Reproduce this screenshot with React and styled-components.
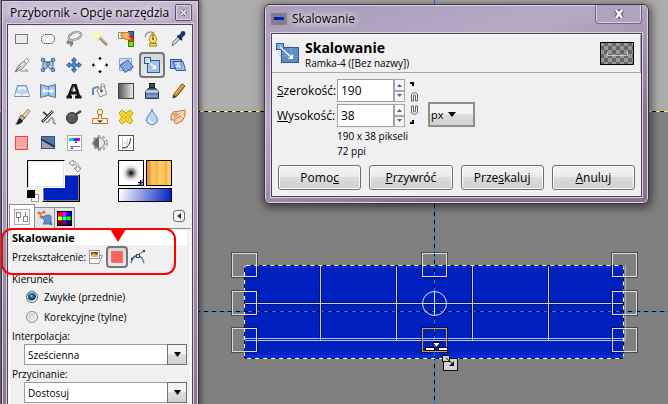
import React, { useState } from 'react'
import styled, { createGlobalStyle, css } from 'styled-components'

const GlobalStyle = createGlobalStyle`
    * {
        box-sizing: border-box;
    }
    body {
        margin: 0;
        background: #808080;
    }
    body, button, input, select {
        font-family: "Open Sans", "Noto Sans", "Liberation Sans", sans-serif;
        font-size: 11px;
        color: #000;
    }
    button, select {
        margin: 0;
        padding: 0;
    }
    svg {
        display: block;
    }
`

const Desktop = styled.main`
    position: relative;
    min-height: 100vh;
    overflow: hidden;
    background: linear-gradient(#acacac 0, #acacac 111px, #808080 111px);
`

const CanvasLayer = styled.svg`
    position: absolute;
    inset: 0;
    width: 100%;
    height: 100%;
`

const Window = styled.section`
    position: absolute;
    left: ${p => p.$left}px;
    top: ${p => p.$top}px;
    width: ${p => p.$width}px;
    padding: 0 ${p => p.$frame}px ${p => p.$frame}px;
    border: 1px solid #3c3544;
    border-radius: ${p => p.$radius};
    background: ${p => p.$background};
    box-shadow: inset 0 0 0 1px #ddd3e6, ${p => p.$shadow};
`

const TitleBar = styled.header`
    display: flex;
    align-items: center;
    height: ${p => p.$height}px;
    padding-left: ${p => p.$indent}px;
    gap: 5px;
`

const TitleText = styled.h1`
    flex: 1;
    margin: 0;
    font-size: 12px;
    font-weight: 400;
    line-height: 18px;
    white-space: nowrap;
    text-shadow: 0 0 6px #fff, 0 0 8px #fff;
`

const WindowBody = styled.div`
    border: 1px solid #4a4153;
    background: #f0f0f0;
    box-shadow: 0 0 0 1px #d9cfe3;
`

const SmallClose = styled.button`
    display: grid;
    place-items: center;
    width: 17px;
    height: 17px;
    margin-right: 1px;
    border: 1px solid #5d5369;
    border-radius: 2px;
    background: #b9adc6;
    box-shadow: inset 0 0 0 1px #dcd4e4;
`

const WideClose = styled.button`
    display: grid;
    place-items: center;
    align-self: flex-start;
    width: 47px;
    height: 19px;
    border: 1px solid #71677f;
    border-top: 0;
    border-radius: 0 0 4px 4px;
    background: #b0a3bf;
    box-shadow: inset 0 -1px 0 #d8cfe1, inset 1px 0 0 #d8cfe1, inset -1px 0 0 #d8cfe1;
`

const ToolGrid = styled.div`
    display: grid;
    grid-template-columns: repeat(7, 26px);
    grid-auto-rows: 26px;
    padding: 1px 1px 0;
`

const pressed = css`
    border: 2px solid #74767a;
    border-radius: 4px;
    background: linear-gradient(#d6d6d6, #e9e9e9);
`

const ToolButton = styled.button`
    display: grid;
    place-items: center;
    border: 0;
    background: transparent;
    ${p => p.$active && pressed}
`

const ColorArea = styled.div`
    display: flex;
    justify-content: space-between;
    height: 48px;
    padding: 4px 20px 0 19px;
`

const SwatchStack = styled.div`
    position: relative;
    width: 56px;
    height: 42px;
`

const Swatch = styled.button`
    position: absolute;
    left: ${p => p.$left}px;
    top: ${p => p.$top}px;
    width: 38px;
    height: 28px;
    border: 1px solid;
    border-color: ${p => p.$raised ? '#fff #000 #000 #fff' : '#000 #fff #fff #000'};
    background: ${p => p.$color};
    box-shadow: inset 0 0 0 1px ${p => p.$raised ? '#7c7c7c' : '#e4e4e4'};
`

const SwatchCorner = styled.button`
    position: absolute;
    left: ${p => p.$left}px;
    top: ${p => p.$top}px;
    border: 0;
    background: transparent;
`

const Previews = styled.div`
    display: grid;
    grid-template-columns: 26px 26px;
    grid-template-rows: 26px 14px;
    gap: 2px;
`

const PreviewButton = styled.button`
    border: 1px solid #000;
    background: ${p => p.$fill};
    overflow: hidden;
    grid-column: ${p => p.$wide ? '1 / 3' : 'auto'};
`

const TabStrip = styled.div`
    display: flex;
    align-items: flex-end;
    height: 24px;
    padding-left: 1px;
`

const Tab = styled.button`
    display: grid;
    place-items: center;
    width: ${p => p.$active ? 26 : 20}px;
    height: ${p => p.$active ? 24 : 21}px;
    border: 1px solid #8d8d99;
    border-bottom: 0;
    border-left-width: ${p => p.$active ? 1 : 0}px;
    background: ${p => p.$active ? '#fff' : '#e4e4e8'};
`

const TabMenu = styled.button`
    display: grid;
    place-items: center;
    width: 12px;
    height: 12px;
    margin: 0 7px 6px auto;
    border: 1px solid #6c6c6c;
    border-radius: 3px;
    background: #f6f6f6;
`

const OptionsPage = styled.div`
    position: relative;
    min-height: 200px;
    margin: 0 1px;
    padding: 1px 3px 60px 2px;
    border-top: 1px solid #8d8d99;
    border-right: 1px solid #fff;
    border-left: 1px solid #fff;
`

const OptionsTitle = styled.h2`
    margin: 0;
    background: #fff;
    font-size: 11px;
    font-weight: 700;
    line-height: 15px;
`

const OptionRow = styled.div`
    display: flex;
    align-items: center;
    height: 24px;
    font-size: 10px;
`

const IconToggle = styled.button`
    display: grid;
    place-items: center;
    width: ${p => p.$active ? 22 : 20}px;
    height: 22px;
    border: 0;
    background: transparent;
    ${p => p.$active && pressed}
`

const RadioSet = styled.fieldset`
    margin: 3px 0 0;
    padding: 0;
    border: 0;
`

const Legend = styled.legend`
    padding: 0;
    font-size: 10px;
    line-height: 15px;
`

const RadioLabel = styled.label`
    display: flex;
    align-items: center;
    gap: 6px;
    height: 20px;
    padding-left: 14px;
    font-size: 10px;
`

const Radio = styled.input`
    appearance: none;
    width: 12px;
    height: 12px;
    margin: 0;
    border: 1px solid #8a8a8a;
    border-radius: 50%;
    background: linear-gradient(135deg, #c4c4c4, #f8f8f8);
    box-shadow: inset 0 0 0 1px #f4f4f4;
    &:checked {
        border-color: #5b6670;
        background: radial-gradient(circle at 45% 40%, #6fd0f4 0, #156a9c 2px, #0b3558 4px, #e8eef2 5px);
    }
`

const SelectLabel = styled.label`
    display: block;
    margin-top: 2px;
    font-size: 10px;
    line-height: 15px;
`

const SelectBox = styled.div`
    display: flex;
    position: relative;
    height: 21px;
    margin-left: 12px;
`

const Select = styled.select`
    appearance: none;
    flex: 1;
    padding: 0 24px 0 3px;
    border: 1px solid #9a9a9a;
    border-radius: 0;
    background: #fff;
    font-size: 10px;
`

const SelectArrow = styled.span`
    position: absolute;
    right: 0;
    top: 0;
    display: grid;
    place-items: center;
    width: 20px;
    height: 100%;
    border: 1px solid #707070;
    background: linear-gradient(#f4f4f4 45%, #dcdcdc 50%, #d0d0d0);
    pointer-events: none;
`

const Highlight = styled.svg`
    position: absolute;
    left: -10px;
    top: -2px;
    pointer-events: none;
`

const DialogHeader = styled.div`
    display: flex;
    align-items: center;
    gap: 5px;
    height: 39px;
    padding: 0 6px 0 3px;
    border-top: 1px solid #fff;
    border-right: 1px solid #a8a8a8;
    border-bottom: 1px solid #a8a8a8;
`

const DialogHeading = styled.div`
    flex: 1;
`

const DialogTitle = styled.h2`
    margin: 0;
    padding-top: 2px;
    font-size: 14px;
    font-weight: 700;
    line-height: 16px;
`

const DialogSubtitle = styled.p`
    margin: 0;
    font-size: 10px;
    line-height: 14px;
`

const Form = styled.form`
    padding: 6px 6px 6px 5px;
`

const SizeFields = styled.div`
    display: grid;
    grid-template-columns: 60px 68px 14px auto;
    grid-template-rows: 23px 23px auto;
    row-gap: 2px;
    justify-content: start;
`

const FieldLabel = styled.label`
    grid-column: 1;
    align-self: center;
    font-size: 12px;
    line-height: 18px;
`

const Spin = styled.div`
    grid-column: 2;
    display: grid;
    grid-template-columns: 1fr 11px;
    grid-template-rows: 1fr 1fr;
`

const SpinInput = styled.input`
    grid-row: 1 / 3;
    min-width: 0;
    width: 100%;
    padding: 0 3px;
    border: 1px solid #a0a0a0;
    border-radius: 0;
    background: #fff;
    font-size: 12px;
`

const SpinButton = styled.button`
    display: grid;
    place-items: center;
    border: 1px solid #a6a6a6;
    background: #f6f6f6;
`

const Chain = styled.button`
    grid-column: 3;
    grid-row: 1 / 3;
    justify-self: end;
    border: 0;
    background: transparent;
`

const UnitBox = styled.div`
    grid-column: 4;
    grid-row: 1 / 3;
    align-self: end;
    position: relative;
    height: 25px;
    margin-left: 9px;
`

const UnitSelect = styled.select`
    appearance: none;
    width: 47px;
    height: 25px;
    padding-left: 0;
    border: 2px solid #8e8e8e;
    border-radius: 0;
    background: linear-gradient(#f4f4f4 48%, #dedede 50%, #d2d2d2);
    font-size: 11px;
    text-indent: 1px;
`

const UnitArrow = styled.span`
    position: absolute;
    left: 20px;
    top: 10px;
    pointer-events: none;
`

const SizeInfo = styled.p`
    grid-column: 2 / 5;
    margin: 0;
    font-size: 10px;
    line-height: 15px;
`

const Actions = styled.div`
    display: grid;
    grid-template-columns: repeat(4, 1fr);
    gap: 8px;
    margin-top: 6px;
    padding-left: 1px;
`

const ActionButton = styled.button`
    height: 25px;
    border: 1px solid #707070;
    border-radius: 3px;
    background: linear-gradient(#f3f3f3, #ebebeb 48%, #dcdcdc 50%, #cfcfcf);
    box-shadow: inset 0 0 0 1px #fafafa;
    font-size: 12px;
`

const Icon = ({ children, size = 18 }) => (
    <svg width={size} height={size} viewBox={`0 0 ${size} ${size}`} fill="none" aria-hidden="true">
        {children}
    </svg>
)

const BLUE = '#2d5c9e'
const PALE = '#a5c4e8'

const toolIcons = {
    'Zaznaczenie prostokątne': (
        <rect x="2.5" y="4.5" width="12" height="9" fill="#e9ece9" stroke="#000" strokeDasharray="1 1" />
    ),
    'Zaznaczenie eliptyczne': (
        <rect x="2.5" y="4.5" width="13" height="9" rx="4" fill="#f4f6f4" stroke="#000" strokeDasharray="1 1" />
    ),
    'Lasso': (
        <>
            <path d="M5 10C1 7 7 2 12 2C18 2 17 7 12 9C9 10 6 10 4 11C1 12 3 14 5 13C7 12 6 10 7 12C8 14 6 16 5 16" stroke="#858585" strokeWidth="2.2" />
            <path d="M5 10C1 7 7 2 12 2C18 2 17 7 12 9C9 10 6 10 4 11" stroke="#d8d8d8" strokeWidth=".9" />
        </>
    ),
    'Różdżka': (
        <>
            <circle cx="7" cy="6" r="4.5" fill="#fff59a" opacity=".6" />
            <path d="M7 6L16 15" stroke="#8d8d80" strokeWidth="2.8" />
            <path d="M9 7L16 14" stroke="#c9c9b4" />
            <path d="M6 5L9 8" stroke="#f0e050" strokeWidth="3" />
            <circle cx="7" cy="6" r="2" fill="#fffde0" />
        </>
    ),
    'Zaznaczenie według koloru': (
        <>
            <rect x="1.5" y="2.5" width="5" height="6" fill="#fff" stroke="#888" />
            <rect x="11.5" y="1.5" width="5" height="5" fill="#3769b5" stroke="#173e7c" />
            <rect x="11.5" y="6.5" width="5" height="5" fill="#f23a20" stroke="#a8140e" />
            <rect x="11.5" y="11.5" width="5" height="5" fill="#7bdc2a" stroke="#38830b" />
            <path d="M4 3.5L8 2.5H12V7L14 9L11 10L8 9L4 7Z" fill="#f8a848" stroke="#d07820" />
            <path d="M7 4L10 7M9 3L12 6" stroke="#ffd9a2" />
        </>
    ),
    'Ścieżki': (
        <>
            <path d="M2 7C3 2 7 1 11 3" stroke="#9a9a9a" strokeWidth="1.3" />
            <path d="M10 2L14 9L12 13H8L6 9Z" fill="#f7e27c" stroke="#a38a1c" />
            <path d="M10 4V9" stroke="#6f5b10" />
            <circle cx="10" cy="9" r="1" fill="#5f4c08" />
            <rect x="6.5" y="13.5" width="7" height="2.5" fill="#fbe04a" stroke="#a38a1c" />
        </>
    ),
    'Pobranie koloru': (
        <>
            <path d="M3 16L4 12L10 6L12 8L6 14Z" fill="#c3daf2" stroke="#6b7480" />
            <path d="M8.5 5.5L13 10" stroke="#12233d" strokeWidth="2" />
            <path d="M11 7L14 4" stroke="#1c355e" strokeWidth="4" />
            <circle cx="14" cy="3.5" r="2.4" fill="#1c355e" />
        </>
    ),
    'Kadrowanie': (
        <>
            <path d="M2 16L6 9L11 5L13 8L9 13Z" fill="#dededa" stroke="#828282" />
            <path d="M2 16L8 10" stroke="#777" />
            <path d="M11 5L14 2L16 5L13 8Z" fill="#f4f4f4" stroke="#9a9a9a" />
            <path d="M7 15H15L12 13" stroke="#8a8a8a" />
        </>
    ),
    'Klatka': (
        <>
            <path d="M4 4L7 6H11L14 4V14L9 11L4 14Z" fill="#c7d6ea" stroke="#6784ad" strokeWidth="1.3" />
            <path d="M5 6V12L9 9ZM13 6V12" stroke="#8aa3c6" />
            {[[4, 4], [14, 4], [4, 14], [14, 14], [9, 8]].map(([x, y]) => (
                <circle key={`${x}-${y}`} cx={x} cy={y} r="1.8" fill="#86aedd" stroke={BLUE} strokeWidth=".9" />
            ))}
        </>
    ),
    'Przesunięcie': (
        <path
            d="M9 1.5L11.5 4.5H10V8H13.5V6.5L16.5 9L13.5 11.5V10H10V13.5H11.5L9 16.5L6.5 13.5H8V10H4.5V11.5L1.5 9L4.5 6.5V8H8V4.5H6.5Z"
            fill="#5b8ccb"
            stroke={BLUE}
        />
    ),
    'Wyrównanie': (
        <>
            <rect x="5" y="5" width="8" height="8" fill="#fff" />
            <path d="M9 1V4M9 14V17M1 9H4M14 9H17" stroke="#000" />
            <path d="M7 3H11L9 1ZM7 15H11L9 17ZM3 7V11L1 9ZM15 7V11L17 9Z" fill="#000" />
        </>
    ),
    'Obrót': (
        <>
            <path d="M2.5 2.5H14.5V14.5H2.5Z" fill="#dde7f3" stroke="#8aa4c6" />
            <path d="M3 5L6 3M3 9L9 3M3 13L13 3M8 14L14 8" stroke="#9fb6d3" />
            <path d="M11 4L16.5 11L8 16.5L3 9.5Z" fill="#83acde" stroke={BLUE} />
        </>
    ),
    'Skalowanie': (
        <>
            <rect x="4.5" y="4.5" width="12" height="12" fill={PALE} stroke={BLUE} />
            <rect x="1.5" y="1.5" width="6" height="6" fill="#c9dcf1" stroke={BLUE} />
            <path d="M5 5L12 12" stroke="#fff" strokeWidth="1.2" />
            <path d="M13 9V13H9Z" fill="#fff" />
        </>
    ),
    'Nachylenie': (
        <>
            <rect x="1.5" y="3.5" width="11" height="9" fill="#8fb4e0" stroke={BLUE} />
            <path d="M4 5.5H14L16.5 14.5H7Z" fill="#8fb4e0" fillOpacity=".8" stroke={BLUE} />
            <path d="M6 7H10V11M10 7L7 11H12" stroke="#e6f0fa" />
        </>
    ),
    'Perspektywa': (
        <>
            <path d="M4.5 3.5H13.5L16.5 14.5H1.5Z" fill="#bcd3ee" stroke="#6d92c0" />
            <path d="M4 11L3 13H8M14 11L15 13H10M6 8V6H12V8" stroke="#fff" strokeWidth="1.5" />
        </>
    ),
    'Odbicie': (
        <>
            <path d="M1.5 2.5L9 4.5L16.5 2.5V15.5L9 13.5L1.5 15.5Z" fill="#a3c4ea" stroke="#4775b2" />
            <path d="M9.5 5V13" stroke="#5f8cc4" />
            <path d="M4 9H14M6 7L4 9L6 11M12 7L14 9L12 11" stroke="#fff" strokeWidth="1.3" />
        </>
    ),
    'Tekst': (
        <>
            <path d="M3.500 15L8 3.500H10.500L14 15M5 11H13M1.500 15H7M10 15H16.500" stroke="#151515" strokeWidth="2.800" />
            <path d="M6 9L9 4" stroke="#777" />
        </>
    ),
    'Wypełnienie kubełkiem': (
        <>
            <path d="M2 13V8C2 5 4 6 8 5" stroke="#5d88c2" strokeWidth="2" />
            <path d="M6 8L13 4L16 12L9 15Z" fill="#f6f6f6" stroke="#8b8b8b" />
            <path d="M10 8V3C10 1 14 1 14 5" stroke="#8b8b8b" />
            <circle cx="10.5" cy="9" r="1.4" fill="#555" />
        </>
    ),
    'Gradient': (
        <>
            <defs>
                <linearGradient id="toolGradient">
                    <stop stopColor="#555" />
                    <stop offset="1" stopColor="#eee" />
                </linearGradient>
            </defs>
            <rect x="1.5" y="1.5" width="15" height="15" fill="url(#toolGradient)" stroke="#444" />
        </>
    ),
    'Stalówka': (
        <>
            <rect x="6.5" y="1.5" width="5" height="4" fill="#484b50" stroke="#222" />
            <path d="M5 6.5H13L15.5 9.5V16.5H2.5V9.5Z" fill="#5b80ae" stroke="#243b5b" />
            <path d="M3 9.5H15" stroke="#d6e1ee" strokeWidth="2" />
            <path d="M4 14H14" stroke="#7f9fc6" strokeWidth="2" />
        </>
    ),
    'Ołówek': (
        <>
            <path d="M4 16L5 12L13 2L16 4L8 14Z" fill="#d88a30" stroke="#7a4310" />
            <path d="M6 12L14 3" stroke="#f7c683" />
            <path d="M4 16L4.5 13L7 15Z" fill="#222" />
        </>
    ),
    'Pędzel': (
        <>
            <path d="M15 1L17 3L12 10L9 8Z" fill="#f0d3b0" stroke="#a07c58" />
            <path d="M8 7L12 10L9 13L6 10Z" fill="#b8b8b8" stroke="#666" />
            <path d="M2 16C5 15 4 11 7 10L10 13C8 16 5 17 2 16Z" fill="#222" />
        </>
    ),
    'Aerograf': (
        <>
            <path d="M3 14L14 3" stroke="#444" strokeWidth="2.8" />
            <path d="M4 13L14 3" stroke="#ddd" />
            <path d="M4 4L9 8" stroke="#444" strokeWidth="1.8" />
            <path d="M7 14C10 16 10 10 13 10C17 11 11 15 17 16" stroke="#8d8d8d" strokeWidth="1.5" />
        </>
    ),
    'Rozjaśnianie': (
        <>
            <circle cx="7" cy="10" r="5.5" fill="#565a5a" stroke="#333" />
            <path d="M10 7L16 3" stroke="#444" strokeWidth="2.5" />
            <path d="M4 8C6 6 8 7 9 8" stroke="#858989" />
        </>
    ),
    'Klonowanie': (
        <>
            <circle cx="9" cy="4" r="2.7" fill="#fbecce" stroke="#b07c30" />
            <path d="M7.5 7H10.5V10.5H16.5V15.5H1.5V10.5H7.5Z" fill="#f8ebd0" stroke="#b07c30" />
            <path d="M6 12.5H12L9 14.5Z" fill="#222" />
        </>
    ),
    'Łatka': (
        <>
            <path d="M2 5L5 2L9 5L13 2L16 5L13 9L16 13L13 16L9 13L5 16L2 13L5 9Z" fill="#f5dc3a" stroke="#c4a000" strokeLinejoin="round" />
            <path d="M5 5L13 13M13 5L5 13M8 5L13 10M5 8L10 13" stroke="#c9a908" strokeWidth=".7" />
        </>
    ),
    'Rozmycie': (
        <>
            <path d="M9 1.500C10 5 14.500 8 14.500 12C14.500 15 12 16.500 9 16.500C6 16.500 3.500 15 3.500 12C3.500 8 8 5 9 1.500Z" fill="#b9d5f0" stroke="#5588bd" />
            <path d="M6 11C6 14 8 15 10 15" stroke="#eef7ff" strokeWidth="1.5" />
        </>
    ),
    'Rozsmarowywanie': (
        <>
            <path d="M2 8L4 4L11 3L16 2L16 8L13 13L7 16L5 14L6 12H2Z" fill="#f7d0a8" stroke="#b87a42" />
            <path d="M4 7L8 5M5 9L10 6M6 11L12 8" stroke="#b87a42" />
        </>
    ),
    'Kanał alfa': (
        <>
            <rect x="2.5" y="2.5" width="12" height="13" fill="#f4a4a4" stroke="#f04040" />
            <path d="M4 13.500H13" stroke="#f8c8c8" />
        </>
    ),
    'Progowanie': (
        <>
            <rect x="2" y="3" width="14" height="12" fill="#9aa4ae" />
            <path d="M2 3H16V13Z" fill="#4877b4" />
            <path d="M2 5L16 13" stroke="#1e2a38" strokeWidth="2" />
            <rect x="2.5" y="2.5" width="13" height="12" stroke="#3c546f" />
        </>
    ),
    'Barwa i nasycenie': (
        <>
            <defs>
                <linearGradient id="rainbow">
                    <stop stopColor="#0d3" />
                    <stop offset=".3" stopColor="#0cf" />
                    <stop offset=".6" stopColor="#32f" />
                    <stop offset="1" stopColor="#f0c" />
                </linearGradient>
            </defs>
            <rect x="2.5" y="1.5" width="14" height="15" fill="#fff" stroke="#aaa" />
            <rect x="4" y="4" width="11" height="3" fill="url(#rainbow)" />
            <path d="M5 12.500H15" stroke="#66f" />
            <path d="M11 7L9.500 9H12.500ZM7 13L5.500 15H8.500Z" fill="#333" />
        </>
    ),
    'Jasność i kontrast': (
        <>
            <circle cx="9" cy="9" r="7" stroke="#a8a8a8" strokeWidth="2" strokeDasharray="3 2" />
            <circle cx="8" cy="9" r="5.5" fill="#e8e8e8" stroke="#777" />
            <path d="M8 4A5 5 0 0 0 8 14Z" fill="#666" />
        </>
    ),
    'Krzywe': (
        <>
            <rect x="1.5" y="1.5" width="15" height="15" fill="#fff" stroke="#555" />
            <path d="M5.5 4V14H15M5 9H14M10 4V14" stroke="#ccc" />
            <path d="M5 14C11 14 13 11 13.5 4" stroke="#333" />
        </>
    )
}

const Mark = ({ up }) => (
    <svg width="7" height="4" viewBox="0 0 7 4" aria-hidden="true">
        <path d={up ? 'M1 4H6L3.5 1Z' : 'M1 0H6L3.5 3Z'} fill="#4761a8" />
    </svg>
)

const DownArrow = ({ width = 7 }) => (
    <svg width={width} height="5" viewBox="0 0 8 5" preserveAspectRatio="none" aria-hidden="true">
        <path d="M0 0H8L4 5Z" fill="#000" />
    </svg>
)

const handleColumns = [232.5, 422.5, 612.5]
const handleRows = [253.5, 291.5, 328.5]

function ImageCanvas() {
    const handles = handleColumns.flatMap((x, col) => handleRows
        .map((y, row) => ({ x, y, col, row }))
        .filter(h => !(h.col === 1 && h.row === 1)))

    return (
        <CanvasLayer aria-hidden="true" fill="none">
            {/* layer boundary */}
            <path d="M0 111.5H4000" stroke="#000" />
            <path d="M0 111.5H4000" stroke="#ffef3a" strokeDasharray="4 4" />
            {/* scaled layer */}
            <rect x="244" y="265" width="380" height="94" rx="3" fill="#0033d6" />
            <rect x="246" y="268" width="376" height="87" fill="#0020c0" />
            {/* guides */}
            <path d="M0 311.5H4000M434.5 0V4000" stroke="#000" />
            <path d="M0 311.5H4000M434.5 0V4000" stroke="#0a80ff" strokeDasharray="4 4" />
            {/* transform grid */}
            <path d="M320.5 266V340M396.5 266V340M472.5 266V340M548.5 266V340M245 303.5H624" stroke="#00127a" strokeWidth="3" />
            <path d="M320.5 266V340M396.5 266V340M472.5 266V340M548.5 266V340M245 303.5H624" stroke="#c4cfec" />
            <path d="M244 338.5H625M244 340.5H625" stroke="#b4c4dc" />
            <path d="M625.5 265V341" stroke="#b0b0b0" />
            {/* selection border */}
            <rect x="244.5" y="265.5" width="379" height="93" rx="2" stroke="#000" />
            <rect x="244.5" y="265.5" width="379" height="93" rx="2" stroke="#fff" strokeDasharray="4 4" />
            {handles.map(({ x, y, col, row }) => (
                <g key={`${col}-${row}`}>
                    <rect x={x - 1} y={y - 1} width="26" height="25" stroke="#000" strokeOpacity=".4" />
                    <rect x={x} y={y} width="24" height="23" stroke={col === 1 && row === 2 ? '#d9a22c' : '#dcdcdc'} />
                </g>
            ))}
            <circle cx="434.5" cy="303.5" r="12" stroke="#d4dbee" />
            <path d="M422 303.5H447M434.5 291V316" stroke="#d8dfee" />
            {/* cursor */}
            <rect x="425" y="347" width="10" height="4" fill="#000" />
            <rect x="438" y="347" width="9" height="4" fill="#000" />
            <path d="M426 349H434M439 349H447" stroke="#fff" strokeWidth="2" />
            <path d="M432.5 342.5H440.5L436.5 347.5Z" fill="#fff" stroke="#000" />
            <rect x="443.5" y="358.5" width="14" height="12" fill="#d4d4d4" stroke="#111" />
            <rect x="442.5" y="355.5" width="7" height="6" fill="#d4d4d4" stroke="#111" />
            <path d="M446 358L453 364" stroke="#111" />
            <path d="M454 361V366H449Z" fill="#111" />
        </CanvasLayer>
    )
}

function ColorPanel() {
    return (
        <ColorArea>
            <SwatchStack>
                <Swatch $left={15} $top={14} $color="#0020c0" $raised aria-label="Kolor tła" />
                <Swatch $left={0} $top={0} $color="#fff" aria-label="Kolor pierwszoplanowy" />
                <SwatchCorner $left={41} $top={-1} aria-label="Zamień kolory">
                    <svg width="14" height="14" viewBox="0 0 14 14" fill="#fff" stroke="#888">
                        <path d="M1 4L5 1V3C9 3 11 5 11 9H13L10 13L6 9H9C9 6 8 5 5 5V7Z" />
                    </svg>
                </SwatchCorner>
                <SwatchCorner $left={0} $top={30} aria-label="Domyślne kolory">
                    <svg width="12" height="12" viewBox="0 0 12 12">
                        <rect x="4.5" y="4.5" width="7" height="7" fill="#fff" stroke="#999" />
                        <rect x="0" y="0" width="8" height="8" fill="#000" />
                    </svg>
                </SwatchCorner>
            </SwatchStack>
            <Previews>
                <PreviewButton $fill="radial-gradient(circle, #000 0, #777 3px, #ddd 6px, #fff 9px)" aria-label="Pędzel">
                    <svg width="24" height="24" viewBox="0 0 24 24">
                        <path d="M24 18V24H18Z" fill="#7b8fe8" />
                        <path d="M21.5 19V24M19 21.5H24" stroke="#000" />
                    </svg>
                </PreviewButton>
                <PreviewButton
                    $fill="linear-gradient(90deg, #dd8a38, #f0a048 3px, #fdc95c 5px, #fbbd58 9px, #f6ac4c 10px, #ffd060 12px, #fcc058 18px, #f4a84c 19px, #ffcb64 21px)"
                    aria-label="Deseń"
                />
                <PreviewButton $wide $fill="linear-gradient(100deg, #fff, #0020c0)" aria-label="Gradient" />
            </Previews>
        </ColorArea>
    )
}

const paletteColors = ['#f00', '#f0f', '#00f', '#ff0', '#0ff', '#0f0', '#800', '#808', '#008']

function DockTabs() {
    return (
        <TabStrip>
            <Tab $active aria-label="Opcje narzędzia">
                <svg width="16" height="16" viewBox="0 0 16 16" fill="none" stroke="#888">
                    <rect x=".5" y=".5" width="15" height="15" fill="#fafafa" stroke="#aaa" />
                    <rect x="2.5" y="3.5" width="4" height="5" />
                    <path d="M4.5 9V13M11.5 3V7" />
                    <rect x="9.5" y="7.5" width="4" height="5" />
                </svg>
            </Tab>
            <Tab aria-label="Stan urządzeń">
                <svg width="16" height="16" viewBox="0 0 16 16">
                    <path d="M4 6C8 8 9 3 14 6V14H6L8 11Z" fill="#5c8fca" stroke="#44719f" />
                    <path d="M2 3H7M4 3V8" stroke="#c4682c" />
                    <circle cx="2" cy="3" r="1.5" fill="#d86d28" />
                    <circle cx="7" cy="2" r="1.5" fill="#d86d28" />
                    <circle cx="4" cy="7" r="1.5" fill="#d86d28" />
                    <path d="M13 12L15 15" stroke="#44719f" strokeWidth="2" />
                </svg>
            </Tab>
            <Tab aria-label="Paleta">
                <svg width="15" height="15" viewBox="0 0 15 15">
                    <rect width="15" height="15" fill="#000" />
                    {paletteColors.map((color, i) => (
                        <rect key={color} x={1 + (i % 3) * 4.4} y={1 + Math.floor(i / 3) * 4.4} width="4" height="4" fill={color} />
                    ))}
                </svg>
            </Tab>
            <TabMenu aria-label="Menu karty">
                <svg width="6" height="6" viewBox="0 0 6 6">
                    <path d="M5 0V6L1 3Z" fill="#333" />
                </svg>
            </TabMenu>
        </TabStrip>
    )
}

function ToolOptions() {
    const [direction, setDirection] = useState('forward')

    return (
        <OptionsPage>
            <OptionsTitle>Skalowanie</OptionsTitle>
            <OptionRow>
                <span>Przekształcenie:</span>
                <IconToggle aria-label="Warstwa">
                    <Icon size={16}>
                        <path d="M1.5 9.5V14.5H11L14.5 6.5H11" fill="#f4f4f4" stroke="#999" />
                        <rect x="1.5" y="1.5" width="10" height="8" fill="#fff" stroke="#999" />
                        <rect x="3" y="3" width="7" height="5" fill="#6d5632" />
                        <path d="M3 6L6 4L8 6L10 5V8H3Z" fill="#e8b64c" />
                    </Icon>
                </IconToggle>
                <IconToggle $active aria-label="Zaznaczenie">
                    <Icon size={16}>
                        <rect x="2.5" y="2.5" width="11" height="11" fill="#fb6262" stroke="#e24848" strokeDasharray="1 1" />
                    </Icon>
                </IconToggle>
                <IconToggle aria-label="Ścieżka">
                    <Icon size={16}>
                        <path d="M1 14C3 4 11 4 14 14" stroke="#5b82b5" strokeWidth="1.5" />
                        <path d="M2 10L14 2" stroke="#555" />
                        <path d="M6.5 5.5H9.5V8.5H6.5Z" fill="#eee" stroke="#333" />
                        <circle cx="14" cy="2" r="1.2" fill="#444" />
                        <circle cx="2" cy="10" r="1.2" fill="#444" />
                    </Icon>
                </IconToggle>
            </OptionRow>
            <RadioSet>
                <Legend>Kierunek</Legend>
                <RadioLabel>
                    <Radio type="radio" name="direction" checked={direction === 'forward'} onChange={() => setDirection('forward')} />
                    Zwykłe (przednie)
                </RadioLabel>
                <RadioLabel>
                    <Radio type="radio" name="direction" checked={direction === 'backward'} onChange={() => setDirection('backward')} />
                    Korekcyjne (tylne)
                </RadioLabel>
            </RadioSet>
            <SelectLabel htmlFor="interpolation">Interpolacja:</SelectLabel>
            <SelectBox>
                <Select id="interpolation">
                    <option>Sześcienna</option>
                </Select>
                <SelectArrow><DownArrow /></SelectArrow>
            </SelectBox>
            <SelectLabel htmlFor="clipping">Przycinanie:</SelectLabel>
            <SelectBox>
                <Select id="clipping">
                    <option>Dostosuj</option>
                </Select>
                <SelectArrow><DownArrow /></SelectArrow>
            </SelectBox>
            <Highlight width="178" height="50" viewBox="0 0 178 50" fill="none" aria-hidden="true">
                <rect x="2" y="2" width="173" height="45" rx="10" stroke="#f00" strokeWidth="2" />
                <path d="M110 2H126L118 15Z" fill="#f00" />
            </Highlight>
        </OptionsPage>
    )
}

function Toolbox() {
    const [activeTool, setActiveTool] = useState('Skalowanie')

    return (
        <Window
            $left={1}
            $top={0}
            $width={198}
            $frame={5}
            $radius="0"
            $background="linear-gradient(#c9bfd4, #b3a6c1 24px, #b5a8c5 140px, #86768f 400px)"
            $shadow="1px 0 5px 1px rgba(0, 0, 0, .45)"
        >
            <TitleBar $height={23} $indent={3}>
                <TitleText>Przybornik - Opcje narzędzia</TitleText>
                <SmallClose aria-label="Zamknij">
                    <svg width="7" height="7" viewBox="0 0 7 7">
                        <path d="M1 1L6 6M6 1L1 6" stroke="#555" strokeWidth="3" />
                        <path d="M1 1L6 6M6 1L1 6" stroke="#fff" strokeWidth="1.5" />
                    </svg>
                </SmallClose>
            </TitleBar>
            <WindowBody>
                <ToolGrid>
                    {Object.entries(toolIcons).map(([name, icon]) => (
                        <ToolButton
                            key={name}
                            $active={name === activeTool}
                            aria-label={name}
                            onClick={() => setActiveTool(name)}
                        >
                            <Icon>{icon}</Icon>
                        </ToolButton>
                    ))}
                </ToolGrid>
                <ColorPanel />
                <DockTabs />
                <ToolOptions />
            </WindowBody>
        </Window>
    )
}

function SpinField({ id, value, onChange }) {
    return (
        <Spin>
            <SpinInput id={id} value={value} onChange={e => onChange(Number(e.target.value) || 0)} />
            <SpinButton type="button" aria-label="Więcej" onClick={() => onChange(value + 1)}><Mark up /></SpinButton>
            <SpinButton type="button" aria-label="Mniej" onClick={() => onChange(value - 1)}><Mark /></SpinButton>
        </Spin>
    )
}

function ScaleDialog() {
    const [width, setWidth] = useState(190)
    const [height, setHeight] = useState(38)

    return (
        <Window
            $left={264}
            $top={4}
            $width={385}
            $frame={6}
            $radius="6px"
            $background="linear-gradient(160deg, #a99bb9, #b6aac5 35%, #a798b5 50%, #84748f 75%)"
            $shadow="1px 2px 8px 2px rgba(0, 0, 0, .5)"
        >
            <TitleBar $height={28} $indent={0}>
                <svg width="16" height="12" viewBox="0 0 16 12" aria-hidden="true">
                    <rect width="16" height="12" fill="#808080" />
                    <rect x="3" y="4" width="10" height="3" fill="#0020c0" />
                </svg>
                <TitleText>Skalowanie</TitleText>
                <WideClose aria-label="Zamknij">
                    <svg width="12" height="10" viewBox="0 0 12 10">
                        <path d="M3 1L9 9M9 1L3 9" stroke="#5a5563" strokeWidth="4.5" />
                        <path d="M3 1L9 9M9 1L3 9" stroke="#fff" strokeWidth="2.5" />
                    </svg>
                </WideClose>
            </TitleBar>
            <WindowBody>
                <DialogHeader>
                    <svg width="25" height="24" viewBox="0 0 25 24" fill="none" aria-hidden="true">
                        <rect x="6.5" y="5.5" width="17" height="15" fill="#5d8dc6" stroke={BLUE} />
                        <path d="M4 4H16V14H4Z" stroke="#a9bfd9" strokeDasharray="1 1" />
                        <rect x="1.5" y="1.5" width="7" height="6" fill="#86aeda" stroke={BLUE} />
                        <path d="M5 5L16 15" stroke="#fff" strokeWidth="1.2" />
                        <path d="M18 12V17H13Z" fill="#fff" />
                    </svg>
                    <DialogHeading>
                        <DialogTitle>Skalowanie</DialogTitle>
                        <DialogSubtitle>Ramka-4 ([Bez nazwy])</DialogSubtitle>
                    </DialogHeading>
                    <svg width="34" height="23" viewBox="0 0 34 23" aria-hidden="true">
                        <defs>
                            <pattern id="checks" width="8" height="8" patternUnits="userSpaceOnUse">
                                <rect width="8" height="8" fill="#666" />
                                <path d="M0 0H4V8H8V4H0Z" fill="#999" />
                            </pattern>
                        </defs>
                        <rect x=".5" y=".5" width="33" height="22" fill="url(#checks)" stroke="#000" />
                        <path d="M7.5 10V13.5H27.5V10" fill="none" stroke="#c8c8c8" />
                    </svg>
                </DialogHeader>
                <Form onSubmit={e => e.preventDefault()}>
                    <SizeFields>
                        <FieldLabel htmlFor="width"><u>S</u>zerokość:</FieldLabel>
                        <SpinField id="width" value={width} onChange={setWidth} />
                        <FieldLabel htmlFor="height"><u>W</u>ysokość:</FieldLabel>
                        <SpinField id="height" value={height} onChange={setHeight} />
                        <Chain type="button" aria-label="Zachowaj proporcje">
                            <svg width="10" height="46" viewBox="0 0 10 46" fill="none">
                                <path d="M1 3H4V6M1 43H4V40" stroke="#000" strokeWidth="2" />
                                <path d="M2.5 21V15C2.5 12 8.5 12 8.5 15V21H6.5V16C6.5 14.5 4.5 14.5 4.5 16V21Z" stroke="#666" />
                                <path d="M2.5 26V32C2.5 35 8.5 35 8.5 32V26H6.5V31C6.5 32.5 4.5 32.5 4.5 31V26Z" stroke="#666" />
                            </svg>
                        </Chain>
                        <UnitBox>
                            <UnitSelect aria-label="Jednostka">
                                <option>px</option>
                            </UnitSelect>
                            <UnitArrow><DownArrow width={8} /></UnitArrow>
                        </UnitBox>
                        <SizeInfo>190 x 38 pikseli<br />72 ppi</SizeInfo>
                    </SizeFields>
                    <Actions>
                        <ActionButton type="button">Pomo<u>c</u></ActionButton>
                        <ActionButton type="reset"><u>P</u>rzywróć</ActionButton>
                        <ActionButton type="submit">Prze<u>s</u>kaluj</ActionButton>
                        <ActionButton type="button"><u>A</u>nuluj</ActionButton>
                    </Actions>
                </Form>
            </WindowBody>
        </Window>
    )
}

export default function App() {
    return (
        <Desktop>
            <GlobalStyle />
            <ImageCanvas />
            <Toolbox />
            <ScaleDialog />
        </Desktop>
    )
}
